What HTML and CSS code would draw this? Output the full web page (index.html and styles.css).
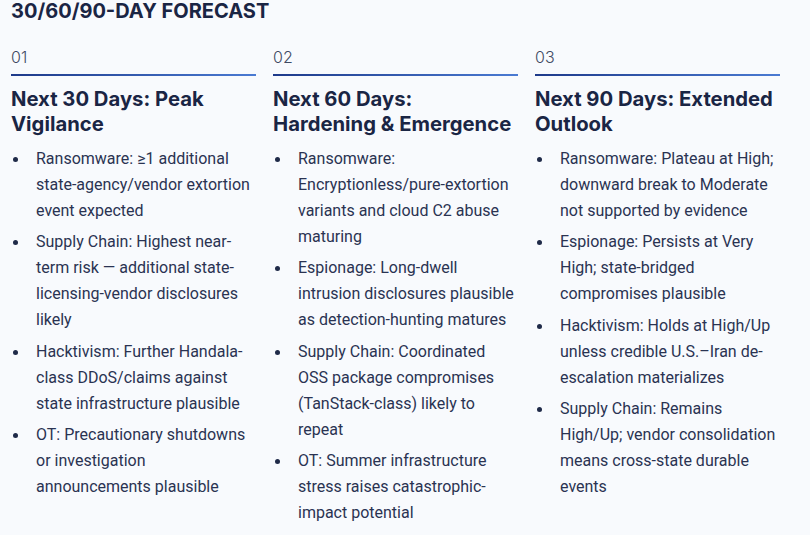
FILE: index.html
```html
<!DOCTYPE html>
<html>
<head>
<meta charset="utf-8">
<link rel="stylesheet" href="styles.css">
</head>
<body>
<section class="forecast">
  <h2 class="title">30/60/90-DAY FORECAST</h2>
  <div class="cols">
    <div class="col">
      <div class="num">01</div>
      <h3 class="head">Next 30 Days: Peak Vigilance</h3>
      <ul class="list">
        <li>Ransomware: ≥1 additional state-agency/vendor extortion event expected</li>
        <li>Supply Chain: Highest near-term risk — additional state-licensing-vendor disclosures likely</li>
        <li>Hacktivism: Further Handala-class DDoS/claims against state infrastructure plausible</li>
        <li>OT: Precautionary shutdowns or investigation announcements plausible</li>
      </ul>
    </div>
    <div class="col">
      <div class="num">02</div>
      <h3 class="head">Next 60 Days: Hardening &amp; Emergence</h3>
      <ul class="list">
        <li>Ransomware: Encryptionless/pure-extortion variants and cloud C2 abuse maturing</li>
        <li>Espionage: Long-dwell intrusion disclosures plausible as detection-hunting matures</li>
        <li>Supply Chain: Coordinated OSS package compromises (TanStack-class) likely to repeat</li>
        <li>OT: Summer infrastructure stress raises catastrophic-impact potential</li>
      </ul>
    </div>
    <div class="col">
      <div class="num">03</div>
      <h3 class="head">Next 90 Days: Extended Outlook</h3>
      <ul class="list">
        <li>Ransomware: Plateau at High; downward break to Moderate not supported by evidence</li>
        <li>Espionage: Persists at Very High; state-bridged compromises plausible</li>
        <li>Hacktivism: Holds at High/Up unless credible U.S.–Iran de-escalation materializes</li>
        <li>Supply Chain: Remains High/Up; vendor consolidation means cross-state durable events</li>
      </ul>
    </div>
  </div>
</section>
</body>
</html>
```

FILE: styles.css
```css
html, body {
  margin: 0;
  padding: 0;
  background: #f8fafd;
}
body {
  font-family: Roboto, "Liberation Sans", sans-serif;
  color: #2a3352;
}
.forecast {
  padding: 1px 0 0 11px;
}
.title {
  margin: 0;
  font-family: Inter, "Liberation Sans", sans-serif;
  font-weight: 700;
  font-size: 20px;
  line-height: 20px;
  color: #1a2544;
}
.cols {
  display: grid;
  grid-template-columns: 245px 245px 245px;
  column-gap: 17px;
  margin-top: 24px;
}
.num {
  font-family: Inter, "Liberation Sans", sans-serif;
  font-weight: 300;
  font-size: 16px;
  line-height: 24px;
  color: #3f4a63;
}
.num::after {
  content: "";
  display: block;
  height: 2px;
  margin-top: 5px;
  background: linear-gradient(90deg, #1e3a8a, #4a7ad2);
}
.head {
  margin: 10px 0 0;
  font-family: Inter, "Liberation Sans", sans-serif;
  font-weight: 700;
  font-size: 20.25px;
  line-height: 25px;
  color: #1a2544;
}
.list {
  list-style: none;
  margin: 10px 0 0;
  padding: 0;
}
.list li {
  display: grid;
  grid-template-columns: 25px 1fr;
  font-size: 16px;
  line-height: 26px;
  margin-bottom: 5.4px;
}
.list li::before {
  content: "";
  width: 5px;
  height: 5px;
  border-radius: 50%;
  background: #1f2a48;
  margin: 11px 0 0 2px;
}
```
